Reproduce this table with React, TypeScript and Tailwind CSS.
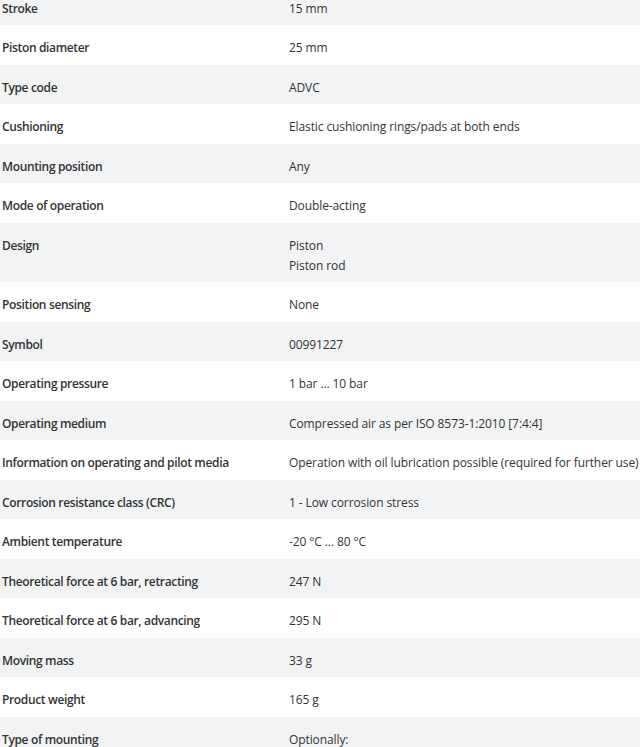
import React from "react";

type Row = { label: string; values: string[] };

const rows: Row[] = [
  { label: "Stroke", values: ["15 mm"] },
  { label: "Piston diameter", values: ["25 mm"] },
  { label: "Type code", values: ["ADVC"] },
  { label: "Cushioning", values: ["Elastic cushioning rings/pads at both ends"] },
  { label: "Mounting position", values: ["Any"] },
  { label: "Mode of operation", values: ["Double-acting"] },
  { label: "Design", values: ["Piston", "Piston rod"] },
  { label: "Position sensing", values: ["None"] },
  { label: "Symbol", values: ["00991227"] },
  { label: "Operating pressure", values: ["1 bar ... 10 bar"] },
  { label: "Operating medium", values: ["Compressed air as per ISO 8573-1:2010 [7:4:4]"] },
  {
    label: "Information on operating and pilot media",
    values: ["Operation with oil lubrication possible (required for further use)"],
  },
  { label: "Corrosion resistance class (CRC)", values: ["1 - Low corrosion stress"] },
  { label: "Ambient temperature", values: ["-20 °C ... 80 °C"] },
  { label: "Theoretical force at 6 bar, retracting", values: ["247 N"] },
  { label: "Theoretical force at 6 bar, advancing", values: ["295 N"] },
  { label: "Moving mass", values: ["33 g"] },
  { label: "Product weight", values: ["165 g"] },
  { label: "Type of mounting", values: ["Optionally:", "Via through-holes", "Via female thread"] },
];

export default function App() {
  return (
    <div className="h-[747px] w-[640px] overflow-hidden bg-white text-[#333] font-['Open_Sans',sans-serif] text-[12px] leading-5">
      <div className="-mt-[14.5px]">
        {rows.map((r, i) => (
          <div
            key={r.label}
            className={`flex pt-[13px] pb-[6.5px] ${i % 2 === 0 ? "bg-[#f2f3f4]" : "bg-white"}`}
          >
            <div className="w-[289px] shrink-0 pl-[2px] font-semibold whitespace-nowrap tracking-[-0.35px]">
              {r.label}
            </div>
            <div className="flex-1 whitespace-nowrap tracking-[-0.1px]">
              {r.values.map((v) => (
                <div key={v}>{v}</div>
              ))}
            </div>
          </div>
        ))}
      </div>
    </div>
  );
}
